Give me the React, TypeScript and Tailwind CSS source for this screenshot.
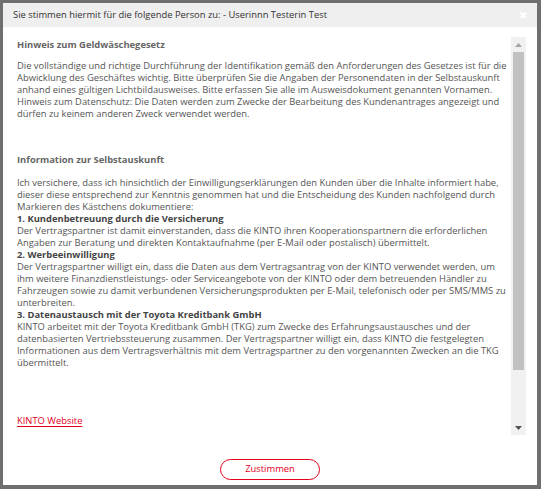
import React from 'react';

const font = { fontFamily: '"Open Sans", "Liberation Sans", sans-serif' };

function Lines({ lines, className = '' }: { lines: string[]; className?: string }) {
  return (
    <div className={className}>
      {lines.map((l) => (
        <p key={l} className="whitespace-nowrap">
          {l}
        </p>
      ))}
    </div>
  );
}

function Scrollbar() {
  return (
    <div className="flex w-[15px] shrink-0 flex-col bg-[#f1f1f1]">
      <div className="flex h-[15px] items-center justify-center">
        <svg width="7" height="4" viewBox="0 0 7 4">
          <path d="M0 4 L3.5 0 L7 4 Z" fill="#a3a3a3" />
        </svg>
      </div>
      <div className="mx-[2px] h-[318px] bg-[#c1c1c1]" />
      <div className="flex-1" />
      <div className="flex h-[15px] items-center justify-center">
        <svg width="7" height="4" viewBox="0 0 7 4">
          <path d="M0 0 L7 0 L3.5 4 Z" fill="#505050" />
        </svg>
      </div>
    </div>
  );
}

export default function App() {
  return (
    <div className="h-[489px] w-[541px] bg-[#6f6f6f] p-[3px] pb-[4px] pr-[4px]" style={font}>
      <div className="flex h-full flex-col bg-white">
        {/* Header */}
        <div className="flex h-[24px] shrink-0 items-center justify-between bg-[#efefef] pl-[10px] pr-[10px]">
          <span className="text-[9.4px] text-[#333]">
            Sie stimmen hiermit für die folgende Person zu: - Userinnn Testerin Test
          </span>
          <span className="text-[10px] leading-none text-white">✖</span>
        </div>

        {/* Body */}
        <div className="flex h-[408px] shrink-0 pl-[14px] pr-[11px] pt-[10px]">
          <div className="flex-1 overflow-hidden pr-[6px] text-[9.4px] leading-[12px] text-[#555]">
            <p className="mt-[2px] font-bold text-[#666]">Hinweis zum Geldwäschegesetz</p>
            <Lines
              className="mt-[9px]"
              lines={[
                'Die vollständige und richtige Durchführung der Identifikation gemäß den Anforderungen des Gesetzes ist für die',
                'Abwicklung des Geschäftes wichtig. Bitte überprüfen Sie die Angaben der Personendaten in der Selbstauskunft',
                'anhand eines gültigen Lichtbildausweises. Bitte erfassen Sie alle im Ausweisdokument genannten Vornamen.',
                'Hinweis zum Datenschutz: Die Daten werden zum Zwecke der Bearbeitung des Kundenantrages angezeigt und',
                'dürfen zu keinem anderen Zweck verwendet werden.',
              ]}
            />
            <p className="mt-[34px] font-bold text-[#666]">Information zur Selbstauskunft</p>
            <Lines
              className="mt-[11px]"
              lines={[
                'Ich versichere, dass ich hinsichtlich der Einwilligungserklärungen den Kunden über die Inhalte informiert habe,',
                'dieser diese entsprechend zur Kenntnis genommen hat und die Entscheidung des Kunden nachfolgend durch',
                'Markieren des Kästchens dokumentiere:',
              ]}
            />
            <p className="font-bold text-[#444]">1. Kundenbetreuung durch die Versicherung</p>
            <Lines
              lines={[
                'Der Vertragspartner ist damit einverstanden, dass die KINTO ihren Kooperationspartnern die erforderlichen',
                'Angaben zur Beratung und direkten Kontaktaufnahme (per E-Mail oder postalisch) übermittelt.',
              ]}
            />
            <p className="font-bold text-[#444]">2. Werbeeinwilligung</p>
            <Lines
              lines={[
                'Der Vertragspartner willigt ein, dass die Daten aus dem Vertragsantrag von der KINTO verwendet werden, um',
                'ihm weitere Finanzdienstleistungs- oder Serviceangebote von der KINTO oder dem betreuenden Händler zu',
                'Fahrzeugen sowie zu damit verbundenen Versicherungsprodukten per E-Mail, telefonisch oder per SMS/MMS zu',
                'unterbreiten.',
              ]}
            />
            <p className="font-bold text-[#444]">3. Datenaustausch mit der Toyota Kreditbank GmbH</p>
            <Lines
              lines={[
                'KINTO arbeitet mit der Toyota Kreditbank GmbH (TKG) zum Zwecke des Erfahrungsaustausches und der',
                'datenbasierten Vertriebssteuerung zusammen. Der Vertragspartner willigt ein, dass KINTO die festgelegten',
                'Informationen aus dem Vertragsverhältnis mit dem Vertragspartner zu den vorgenannten Zwecken an die TKG',
                'übermittelt.',
              ]}
            />
            <a href="#" className="mt-[46px] inline-block text-[#e4001b] underline decoration-[#e4001b] underline-offset-2">
              KINTO Website
            </a>
          </div>
          <Scrollbar />
        </div>

        {/* Footer */}
        <div className="flex flex-1 items-start justify-center pt-[24px]">
          <button className="h-[21px] w-[100px] rounded-full border border-[#e4001b] text-[9.4px] text-[#e4001b]">
            Zustimmen
          </button>
        </div>
      </div>
    </div>
  );
}
